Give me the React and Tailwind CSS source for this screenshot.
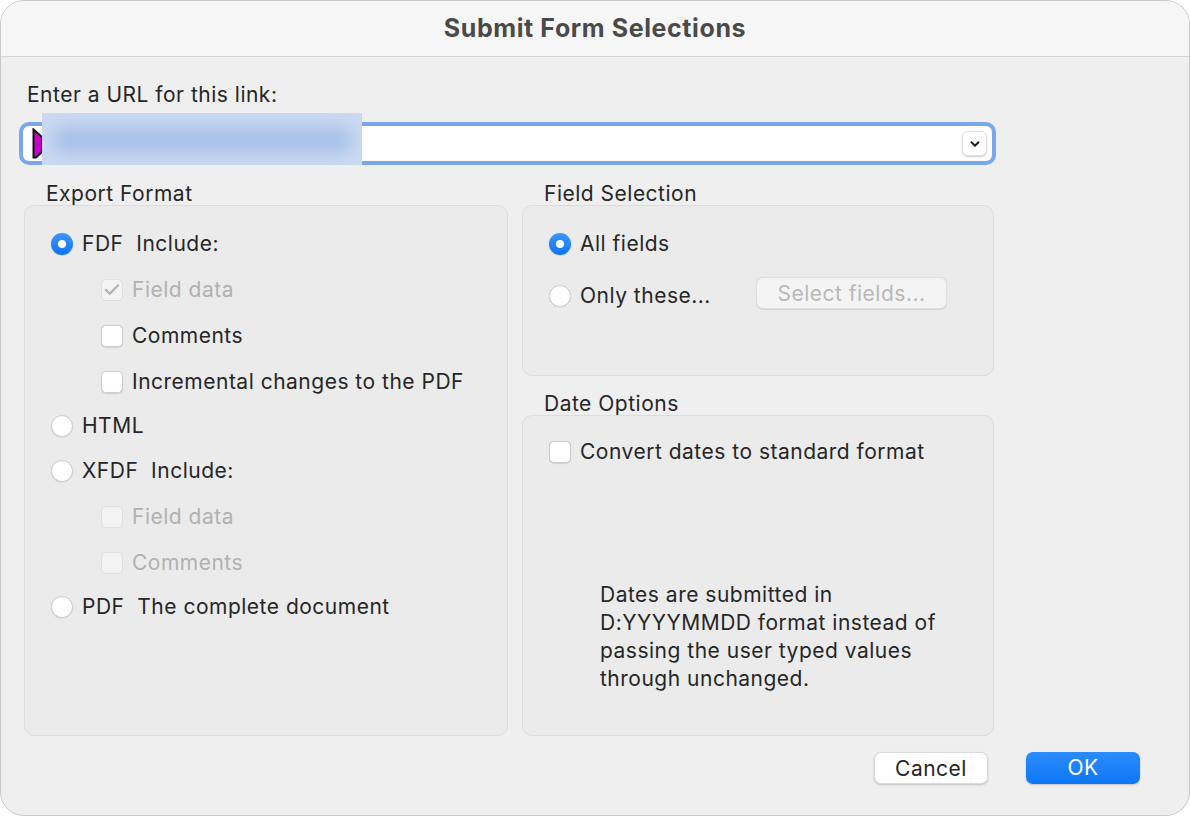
import { Check, ChevronDown } from 'lucide-react';

const font = { fontFamily: 'Inter, "Noto Sans", "Liberation Sans", sans-serif' };

function Radio({ checked }) {
  if (checked) {
    return (
      <span className="w-[22px] h-[22px] rounded-full bg-gradient-to-b from-[#3b95fd] to-[#0a74f5] flex items-center justify-center shrink-0 shadow-[0_0.5px_1px_rgba(0,0,0,0.25)]">
        <span className="w-[8px] h-[8px] rounded-full bg-white" />
      </span>
    );
  }
  return (
    <span className="w-[22px] h-[22px] rounded-full bg-white border border-[#cfcfcf] shrink-0 shadow-[0_0.5px_1px_rgba(0,0,0,0.12)]" />
  );
}

function Checkbox({ checked, disabled }) {
  return (
    <span
      className={
        disabled
          ? 'w-[22px] h-[22px] rounded-[5px] bg-[#f3f3f3] border border-[#dedede] flex items-center justify-center shrink-0'
          : 'w-[22px] h-[22px] rounded-[5px] bg-white border border-[#cdcdcd] flex items-center justify-center shrink-0 shadow-[0_0.5px_1px_rgba(0,0,0,0.12)]'
      }
    >
      {checked && <Check className="w-[18px] h-[18px] text-[#b3b3b3]" strokeWidth={3.2} />}
    </span>
  );
}

function RadioRow({ checked, label, h }) {
  return (
    <div className={`flex items-center gap-[9px] pl-[26px] ${h}`}>
      <Radio checked={checked} />
      <span className="whitespace-pre">{label}</span>
    </div>
  );
}

function CheckRow({ checked, disabled, label, h }) {
  return (
    <div className={`flex items-center gap-[9px] pl-[76px] ${h}`}>
      <Checkbox checked={checked} disabled={disabled} />
      <span className={disabled ? 'text-[#b1b1b1]' : ''}>{label}</span>
    </div>
  );
}

export default function App() {
  return (
    <div className="w-[1190px] h-[816px] bg-white" style={font}>
      <div className="w-full h-full bg-[#efefef] rounded-[24px] border border-[#c9c9c9] overflow-hidden flex flex-col text-[21px] tracking-[0.5px] text-[#262626]">
        <div className="h-[56px] shrink-0 bg-[#f6f6f6] border-b border-[#d4d4d4] flex items-center justify-center">
          <h1 className="text-[25px] font-bold text-[#4a4a4a] tracking-[0.6px]">Submit Form Selections</h1>
        </div>

        <div className="flex flex-col pt-[26px]">
          <div className="pl-[26px] leading-[24px]">Enter a URL for this link:</div>

          <div className="relative ml-[18px] mt-[15px] w-[977px] h-[43px] rounded-[10px] bg-[#7aa7eb] p-[4px]">
            <div className="w-full h-full bg-white rounded-[6px] flex items-center justify-end pr-[5px]">
              <span className="w-[25px] h-[25px] rounded-[6px] bg-white border border-[#e2e2e2] shadow-[0_1px_2px_rgba(0,0,0,0.2)] flex items-center justify-center">
                <ChevronDown className="w-[14px] h-[14px] text-[#222]" strokeWidth={3.5} />
              </span>
            </div>
            <svg className="absolute left-[13px] top-[6px]" width="12" height="31" viewBox="0 0 12 31">
              <path d="M1.5 1.5 L10 9 L10 24 L4 29.5 L1.5 29.5 Z" fill="#c800c8" stroke="#111" strokeWidth="2" />
            </svg>
            <div className="absolute left-[23px] top-[-9px] w-[320px] h-[52px] bg-[#cbd9f1] overflow-hidden">
              <div className="absolute left-[10px] top-[14px] w-[300px] h-[26px] rounded-full bg-[#a7c1e8] blur-[8px]" />
            </div>
          </div>

          <div className="flex gap-[14px] pl-[23px] mt-[17px]">
            <div className="w-[484px] flex flex-col">
              <div className="pl-[22px] leading-[24px] h-[23px]">Export Format</div>
              <div className="h-[531px] rounded-[10px] bg-[#ebebeb] border border-[#dcdcdc] pt-[15px] flex flex-col">
                <RadioRow checked label="FDF  Include:" h="h-[46px]" />
                <CheckRow checked disabled label="Field data" h="h-[46px]" />
                <CheckRow label="Comments" h="h-[46px]" />
                <CheckRow label="Incremental changes to the PDF" h="h-[45px]" />
                <RadioRow label="HTML" h="h-[44px]" />
                <RadioRow label="XFDF  Include:" h="h-[46px]" />
                <CheckRow disabled label="Field data" h="h-[46px]" />
                <CheckRow disabled label="Comments" h="h-[45px]" />
                <RadioRow label="PDF  The complete document" h="h-[44px]" />
              </div>
            </div>

            <div className="w-[472px] flex flex-col">
              <div className="pl-[22px] leading-[24px] h-[23px]">Field Selection</div>
              <div className="h-[171px] rounded-[10px] bg-[#ebebeb] border border-[#dcdcdc] pt-[15px] flex flex-col">
                <RadioRow checked label="All fields" h="h-[46px]" />
                <div className="flex items-center pl-[26px] h-[58px]">
                  <div className="flex items-center gap-[9px] w-[207px]">
                    <Radio />
                    <span>Only these...</span>
                  </div>
                  <button className="w-[191px] h-[32px] rounded-[7px] bg-[#f4f4f4] border border-[#dedede] shadow-[0_0.5px_1px_rgba(0,0,0,0.1)] text-[#b8b8b8] text-[21px] tracking-[0.5px] -mt-[6px]">
                    Select fields...
                  </button>
                </div>
              </div>

              <div className="pl-[22px] leading-[24px] h-[23px] mt-[16px]">Date Options</div>
              <div className="h-[321px] rounded-[10px] bg-[#ebebeb] border border-[#dcdcdc] pt-[24px] flex flex-col">
                <div className="flex items-center gap-[9px] pl-[26px] h-[24px]">
                  <Checkbox />
                  <span>Convert dates to standard format</span>
                </div>
                <p className="pl-[77px] mt-[117px] leading-[28px]">
                  Dates are submitted in
                  <br />
                  D:YYYYMMDD format instead of
                  <br />
                  passing the user typed values
                  <br />
                  through unchanged.
                </p>
              </div>
            </div>
          </div>

          <div className="flex justify-end gap-[38px] pr-[49px] mt-[16px]">
            <button className="w-[114px] h-[32px] rounded-[7px] bg-white border border-[#dadada] shadow-[0_1px_2px_rgba(0,0,0,0.2)] text-[21px] tracking-[0.5px] text-[#262626]">
              Cancel
            </button>
            <button className="w-[114px] h-[32px] rounded-[7px] bg-gradient-to-b from-[#2a8cfd] to-[#0b76f6] shadow-[0_1px_2px_rgba(0,0,0,0.2)] text-[21px] tracking-[0.5px] text-white">
              OK
            </button>
          </div>
        </div>
      </div>
    </div>
  );
}
